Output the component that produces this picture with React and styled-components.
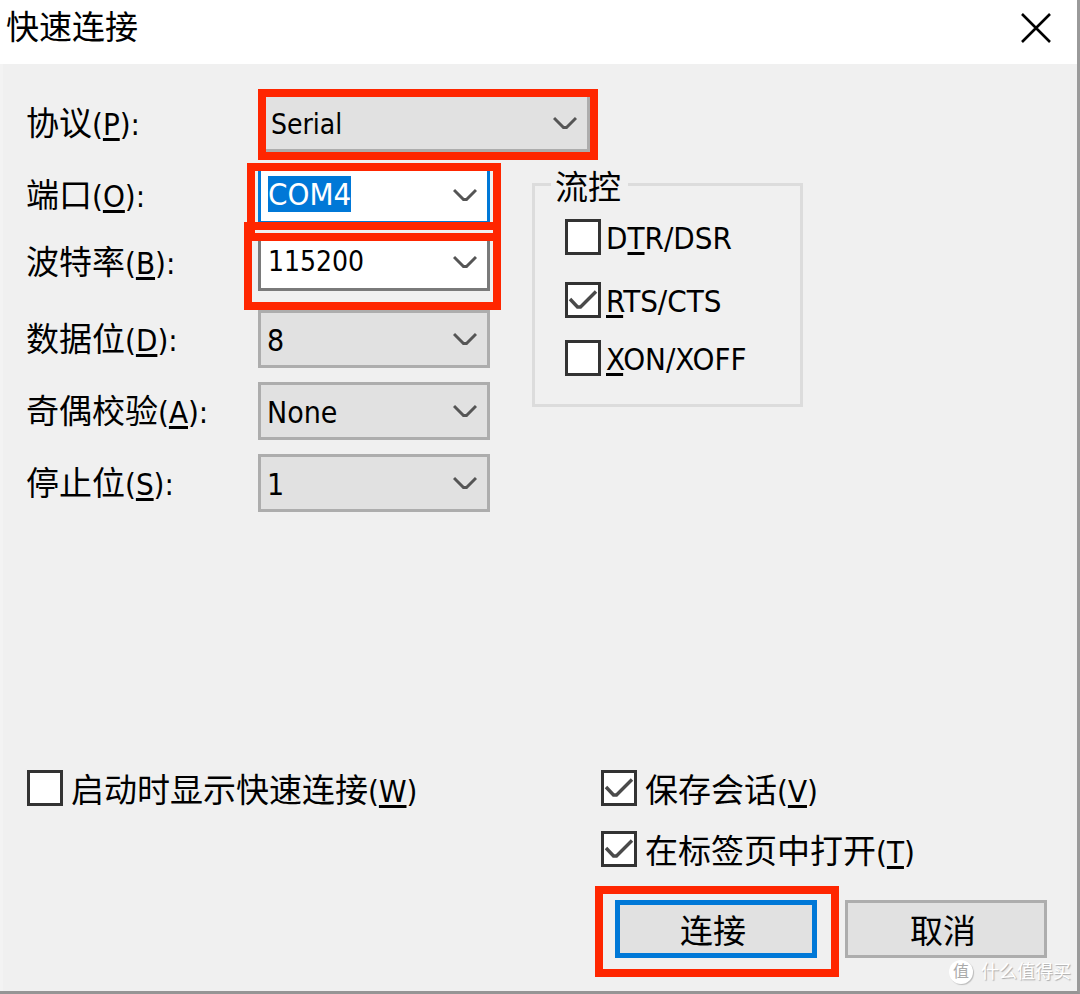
import React, { useEffect, useRef, useState } from "react";
import styled, { createGlobalStyle } from "styled-components";

const GlobalStyle = createGlobalStyle`
  * {
    box-sizing: border-box;
  }

  body {
    margin: 0;
    background-color: #f0f0f0;
    color: #000;
    font-family: "DejaVu Sans Condensed", "Noto Sans CJK SC", sans-serif;
    font-size: 31px;
  }
`;

const Dialog = styled.form`
  position: relative;
  display: flex;
  flex-direction: column;
  min-height: 100vh;
  border-right: 3px solid #9a9a9a;
  border-bottom: 3px solid #959595;
`;

const TitleBar = styled.header`
  display: flex;
  align-items: center;
  justify-content: space-between;
  height: 64px;
  padding: 0 24px 8px 6px;
  background-color: white;
`;

const Title = styled.h1`
  margin: 0;
  font-size: 33px;
  font-weight: 400;
  line-height: 40px;
`;

const CloseButton = styled.button`
  display: flex;
  padding: 0;
  border: none;
  background: none;
  cursor: pointer;
`;

const Body = styled.main`
  flex: 1;
  display: flex;
  flex-direction: column;
  justify-content: space-between;
  padding: 30px 30px 33px 23px;
  border-left: 3px solid #f3f3f3;
`;

const Settings = styled.div`
  display: grid;
  grid-template-columns: 232px 274px 1fr;
  grid-template-rows: 72px 67px 77px 72px 72px 58px;
  align-items: start;
`;

const FieldLabel = styled.label`
  grid-column: 1;
  display: flex;
  align-items: center;
  height: 58px;
  padding-top: 2px;
  white-space: nowrap;
`;

const Caption = styled.span`
  font-size: 33px;
  line-height: 36px;
`;

const AccessKey = styled.u`
  text-decoration-thickness: 3px;
  text-underline-offset: 3px;
  text-decoration-skip-ink: none;
`;

const Control = styled.div`
  position: relative;
  grid-column: ${(props) => (props.$wide ? "2 / 4" : "2")};
  display: grid;
  align-items: center;
  width: ${(props) => (props.$wide ? "332px" : "232px")};
  height: 58px;
`;

const Select = styled.select`
  grid-area: 1 / 1;
  width: 100%;
  height: 100%;
  padding: 2px 40px 0 ${(props) => (props.$wide ? "10px" : "6px")};
  appearance: none;
  border: 3px solid #adadad;
  border-radius: 0;
  background-color: #e1e1e1;
  color: #000;
  font-family: inherit;
  font-size: ${(props) => (props.$wide ? "28px" : "30px")};
`;

const ComboInput = styled.input`
  grid-area: 1 / 1;
  width: 100%;
  height: 100%;
  padding: 0 40px 2px 7px;
  border: 3px solid #7a7a7a;
  border-radius: 0;
  outline: none;
  background-color: white;
  color: #000;
  font-family: inherit;
  font-size: ${(props) => (props.$numeric ? "28px" : "31px")};

  &:focus {
    border-color: #0078d7;
  }

  &::selection {
    background-color: #0078d7;
    color: white;
  }
`;

const Arrow = styled.svg`
  grid-area: 1 / 1;
  justify-self: end;
  width: 24px;
  height: 14px;
  margin-right: 13px;
  pointer-events: none;
`;

const ArrowButton = styled.button`
  grid-area: 1 / 1;
  justify-self: end;
  display: grid;
  padding: 0;
  border: none;
  background: none;
`;

// red marker drawn over a control
const Highlight = styled.span`
  position: absolute;
  z-index: 2;
  inset: ${(props) => props.$inset};
  border: 8px solid #ff2600;
  pointer-events: none;
`;

const GroupBox = styled.fieldset`
  grid-column: 3;
  grid-row: 2 / 7;
  display: grid;
  grid-template-rows: 63px 58px 36px;
  width: 271px;
  margin: 0;
  padding: 17px 0 28px 30px;
  border: 3px solid #dcdcdc;
`;

const Legend = styled.legend`
  height: 36px;
  margin-left: -14px;
  padding: 6px 7px 0 4px;
  font-size: 33px;
  line-height: 32px;
`;

const CheckLabel = styled.label`
  display: flex;
  align-items: center;
  gap: ${(props) => (props.$compact ? "5px" : "8px")};
  height: 36px;
  white-space: nowrap;
`;

const CheckBox = styled.span`
  display: grid;
  width: 36px;
  height: 36px;
`;

const CheckInput = styled.input`
  grid-area: 1 / 1;
  width: 36px;
  height: 36px;
  margin: 0;
  appearance: none;
  border: 3px solid #333;
  background-color: white;

  & + svg {
    visibility: hidden;
  }

  &:checked + svg {
    visibility: visible;
  }
`;

const CheckMark = styled.svg`
  grid-area: 1 / 1;
  width: 36px;
  height: 36px;
  pointer-events: none;
`;

const CheckText = styled.span`
  padding-top: ${(props) => (props.$compact ? "2px" : "5px")};
`;

const Footer = styled.footer`
  display: flex;
  align-items: flex-start;
  justify-content: space-between;
  padding-left: 1px;
`;

const FooterOptions = styled.div`
  display: flex;
  flex-direction: column;
  gap: 25px;
  width: 446px;
`;

const Actions = styled.div`
  display: flex;
  justify-content: flex-end;
  gap: 28px;
  margin-top: 8px;
`;

const ButtonWrap = styled.div`
  position: relative;
`;

const Button = styled.button`
  width: 202px;
  height: 58px;
  padding: 6px 6px 0 0;
  border: ${(props) => (props.$primary ? "5px solid #0078d7" : "3px solid #adadad")};
  background-color: #e1e1e1;
  color: #000;
  font-family: inherit;
  font-size: 33px;
  line-height: 40px;
`;

const Watermark = styled.div`
  position: absolute;
  right: 6px;
  bottom: 7px;
  display: flex;
  align-items: center;
  gap: 8px;
  color: white;
  font-size: 18px;
  line-height: 24px;
  text-shadow: 1px 1px 1px #aaa;
`;

const WatermarkBadge = styled.span`
  width: 24px;
  height: 24px;
  border-radius: 50%;
  background-color: white;
  box-shadow: 1px 1px 1px #bbb;
  color: #aaa;
  font-size: 16px;
  text-align: center;
  text-shadow: none;
`;

const Chevron = () => (
  <Arrow viewBox="0 0 24 14" fill="none" stroke="#555" strokeWidth="3">
    <path d="M1 2 L10.5 11.5 H13.5 L23 2" />
  </Arrow>
);

const Field = ({ id, text, accessKey }) => (
  <FieldLabel htmlFor={id}>
    <Caption>{text}</Caption>
    <span>
      (<AccessKey>{accessKey}</AccessKey>):
    </span>
  </FieldLabel>
);

const Check = ({ checked, compact, children }) => (
  <CheckLabel $compact={compact}>
    <CheckBox>
      <CheckInput type="checkbox" defaultChecked={checked} />
      <CheckMark viewBox="0 0 36 36" fill="none" stroke="#4a4a4a" strokeWidth="3.4">
        <path d="M5 17 L12.5 25 H15.5 L31 9.5" />
      </CheckMark>
    </CheckBox>
    <CheckText $compact={compact}>{children}</CheckText>
  </CheckLabel>
);

function App() {
  const [port, setPort] = useState("COM4");
  const [baudRate, setBaudRate] = useState("115200");
  const portRef = useRef(null);

  useEffect(() => {
    portRef.current.focus();
    portRef.current.select();
  }, []);

  return (
    <>
      <GlobalStyle />
      <Dialog onSubmit={(e) => e.preventDefault()}>
        <TitleBar>
          <Title>快速连接</Title>
          <CloseButton type="button" aria-label="关闭">
            <svg width="34" height="34" viewBox="0 0 34 34" stroke="#000" strokeWidth="2.6">
              <path d="M3 3 L31 31 M31 3 L3 31" />
            </svg>
          </CloseButton>
        </TitleBar>
        <Body>
          <Settings>
            <Field id="protocol" text="协议" accessKey="P" />
            <Control $wide>
              <Select id="protocol" $wide>
                <option>Serial</option>
              </Select>
              <Chevron />
              <Highlight $inset="-5px -8px -8px 0" />
            </Control>

            <Field id="port" text="端口" accessKey="O" />
            <Control>
              <ComboInput
                id="port"
                ref={portRef}
                value={port}
                onChange={(e) => setPort(e.target.value)}
              />
              <ArrowButton type="button" aria-label="端口">
                <Chevron />
              </ArrowButton>
              <Highlight $inset="-3px -11px -17px -11px" />
            </Control>

            <Field id="baud" text="波特率" accessKey="B" />
            <Control>
              <ComboInput
                id="baud"
                $numeric
                value={baudRate}
                onChange={(e) => setBaudRate(e.target.value)}
              />
              <ArrowButton type="button" aria-label="波特率">
                <Chevron />
              </ArrowButton>
              <Highlight $inset="-11px -11px -19px -14px" />
            </Control>

            <Field id="databits" text="数据位" accessKey="D" />
            <Control>
              <Select id="databits">
                <option>8</option>
              </Select>
              <Chevron />
            </Control>

            <Field id="parity" text="奇偶校验" accessKey="A" />
            <Control>
              <Select id="parity">
                <option>None</option>
              </Select>
              <Chevron />
            </Control>

            <Field id="stopbits" text="停止位" accessKey="S" />
            <Control>
              <Select id="stopbits">
                <option>1</option>
              </Select>
              <Chevron />
            </Control>

            <GroupBox>
              <Legend>流控</Legend>
              <Check compact>
                D<AccessKey>T</AccessKey>R/DSR
              </Check>
              <Check compact checked>
                <AccessKey>R</AccessKey>TS/CTS
              </Check>
              <Check compact>
                <AccessKey>X</AccessKey>ON/XOFF
              </Check>
            </GroupBox>
          </Settings>

          <Footer>
            <Check>
              <Caption>启动时显示快速连接</Caption>(<AccessKey>W</AccessKey>)
            </Check>
            <FooterOptions>
              <Check checked>
                <Caption>保存会话</Caption>(<AccessKey>V</AccessKey>)
              </Check>
              <Check checked>
                <Caption>在标签页中打开</Caption>(<AccessKey>T</AccessKey>)
              </Check>
              <Actions>
                <ButtonWrap>
                  <Button type="submit" $primary>
                    连接
                  </Button>
                  <Highlight $inset="-14px -22px -19px -20px" />
                </ButtonWrap>
                <Button type="button">取消</Button>
              </Actions>
            </FooterOptions>
          </Footer>
        </Body>
        <Watermark>
          <WatermarkBadge>值</WatermarkBadge>
          什么值得买
        </Watermark>
      </Dialog>
    </>
  );
}

export default App;
